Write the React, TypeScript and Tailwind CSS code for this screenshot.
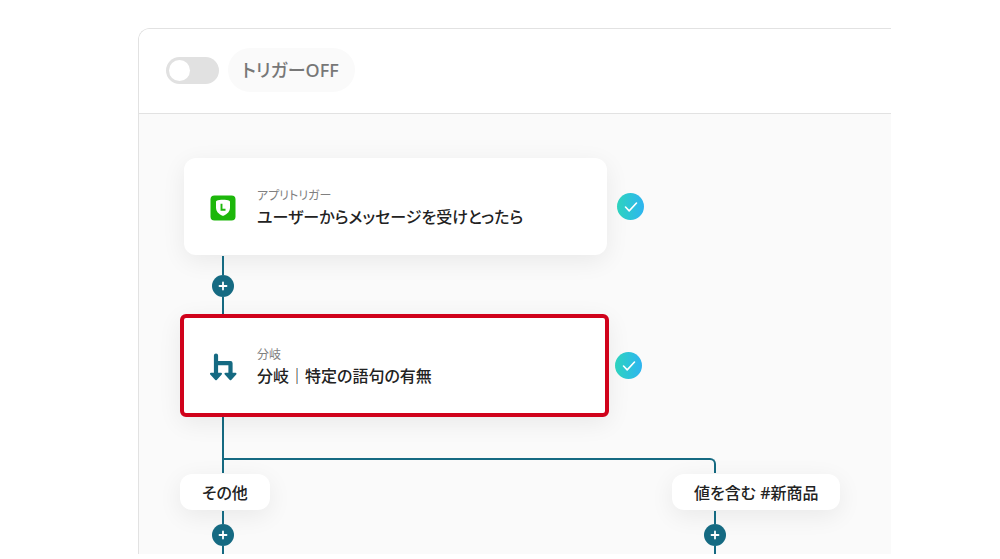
import { useState } from 'react';
import type { ReactNode } from 'react';

function AppIcon() {
  return (
    <svg width="26" height="26" viewBox="0 0 26 26" aria-hidden="true">
      <rect x="0.5" y="0.5" width="25" height="25" rx="4" fill="#1db70b" />
      <path
        d="M13 4.8c-2.4 0-4.8.4-6.300.9-.5.2-.7.5-.7 1v5.800c0 3.800 2.500 6.500 6.400 8.200.4.2.8.2 1.200 0 3.900-1.700 6.400-4.400 6.400-8.200V6.700c0-.5-.2-.8-.7-1-1.500-.5-3.900-.9-6.300-.9z"
        fill="#fff"
      />
      <path d="M11.500 8.800v6h4" fill="none" stroke="#1db70b" strokeWidth="1.9" />
    </svg>
  );
}

function BranchIcon() {
  return (
    <svg width="28" height="28" viewBox="1 0 28 28" aria-hidden="true">
      <path
        d="M7 2.500V22M7 10.200h14.500V22"
        fill="none"
        stroke="#156a82"
        strokeWidth="4.2"
        strokeLinecap="round"
        strokeLinejoin="round"
      />
      <path
        d="M2 20.800h10L7 26.200zM16.500 20.800h10l-5 5.400z"
        fill="#156a82"
        stroke="#156a82"
        strokeWidth="2"
        strokeLinejoin="round"
      />
    </svg>
  );
}

function CheckBadge() {
  return (
    <span className="flex size-[27px] shrink-0 items-center justify-center rounded-full bg-linear-to-r from-[#2fd3bd] to-[#2fb4f0]">
      <svg width="14" height="12" viewBox="0 0 14 12" fill="none" aria-hidden="true">
        <path d="M1.500 6l3.700 3.900L12.500 2" stroke="#fff" strokeWidth="1.6" strokeLinecap="round" strokeLinejoin="round" />
      </svg>
    </span>
  );
}

function AddButton() {
  return (
    <button
      type="button"
      aria-label="追加"
      className="flex size-[22px] shrink-0 cursor-pointer items-center justify-center rounded-full bg-[#156a82] hover:bg-[#0f566a]"
    >
      <svg width="10" height="10" viewBox="0 0 10 10" aria-hidden="true">
        <path d="M5 1.500v7M1.500 5h7" stroke="#fff" strokeWidth="1.8" strokeLinecap="round" />
      </svg>
    </button>
  );
}

function Connector({ children }: { children: ReactNode }) {
  return <div className="ml-8 flex w-[22px] flex-col items-center">{children}</div>;
}

type StepProps = { icon: ReactNode; category: string; title: string; selected?: boolean };

function Step({ icon, category, title, selected }: StepProps) {
  return (
    <div className={'flex items-center ' + (selected ? 'gap-1.5' : 'ml-1 gap-2.5')}>
      <div
        className={
          'flex items-center bg-white px-[26px] shadow-[0_6px_24px_rgba(0,0,0,0.07)] ' +
          (selected
            ? 'w-[429px] rounded-md border-4 border-[#d0021b] pt-[27px] pb-[25px]'
            : 'w-[423px] rounded-xl pt-7 pb-[26px]')
        }
      >
        <span className="w-[47px] shrink-0">{icon}</span>
        <div>
          <p className="text-xs leading-[19px] text-[#808080]">{category}</p>
          <p className="text-base leading-6 font-medium text-[#222]">{title}</p>
        </div>
      </div>
      <CheckBadge />
    </div>
  );
}

function Branch({ label }: { label: string }) {
  return (
    <div>
      <div className="w-fit rounded-xl bg-white px-[22px] pt-[7px] pb-[5px] text-base leading-6 font-medium whitespace-nowrap text-[#222] shadow-[0_6px_24px_rgba(0,0,0,0.07)]">
        {label}
      </div>
      <Connector>
        <span className="mt-px h-[13px] w-0.5 bg-[#156a82]" />
        <AddButton />
        <span className="h-6 w-0.5 bg-[#156a82]" />
      </Connector>
    </div>
  );
}

export default function App() {
  const [enabled, setEnabled] = useState(false);

  return (
    <main className="flex h-screen flex-col bg-white pt-7 pr-[109px] pb-[5px] pl-[138px] font-['Noto_Sans','Noto_Sans_CJK_JP',sans-serif] [font-feature-settings:'palt']">
      <div className="flex min-h-0 flex-1 flex-col overflow-hidden rounded-tl-xl border-t border-l border-[#e2e2e2]">
        <header className="flex shrink-0 items-center gap-[9px] border-b border-[#e2e2e2] bg-white pt-[19px] pb-[21px] pl-[27px]">
          <input
            id="trigger"
            type="checkbox"
            role="switch"
            checked={enabled}
            onChange={e => setEnabled(e.target.checked)}
            className="flex h-[27px] w-[53px] shrink-0 cursor-pointer appearance-none items-center rounded-full bg-[#e1e1e1] px-[3px] before:size-[21px] before:rounded-full before:bg-white checked:justify-end checked:bg-[#2fd3bd]"
          />
          <label htmlFor="trigger" className="rounded-full bg-[#fafafa] pr-4 pl-3.5 py-2.5 text-lg leading-6 font-medium text-[#777]">
            {enabled ? 'トリガーON' : 'トリガーOFF'}
          </label>
        </header>

        <div className="min-h-0 flex-1 overflow-hidden bg-[#fafafa] pt-11 pl-[41px]">
          <Step icon={<AppIcon />} category="アプリトリガー" title="ユーザーからメッセージを受けとったら" />
          <Connector>
            <span className="mt-px h-[19px] w-0.5 bg-[#156a82]" />
            <AddButton />
            <span className="h-[17px] w-0.5 bg-[#156a82]" />
          </Connector>
          <Step icon={<BranchIcon />} category="分岐" title="分岐｜特定の語句の有無" selected />
          <div className="ml-[42px] h-[41px] w-0.5 bg-[#156a82]" />
          <div className="mb-px ml-[42px] h-[15px] w-[494px] rounded-tr-md border-x-2 border-t-2 border-[#156a82]" />
          <div className="grid grid-cols-[492px_auto] justify-start">
            <Branch label="その他" />
            <Branch label="値を含む #新商品" />
          </div>
        </div>
      </div>
    </main>
  );
}
